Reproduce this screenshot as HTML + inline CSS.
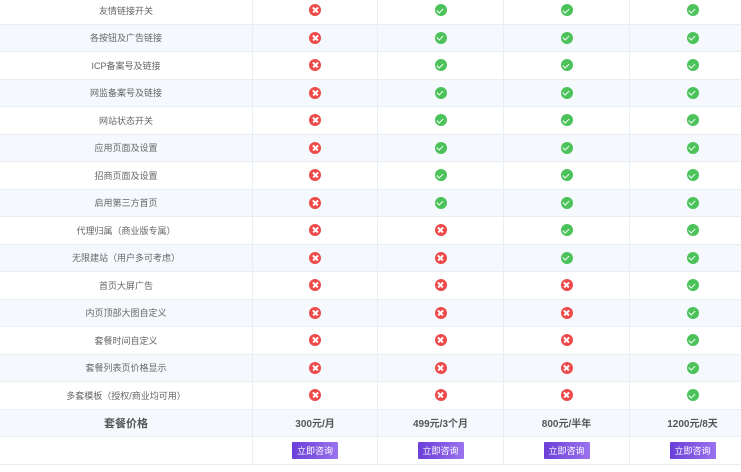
<!DOCTYPE html>
<html><head><meta charset="utf-8"><style>
body{margin:0;width:741px;height:472px;overflow:hidden;background:#fff;font-family:"Liberation Sans","Noto Sans CJK SC",sans-serif;position:relative}
.r{position:absolute;left:0;width:755px;height:27.5px;border-bottom:1px solid #e9eef2;box-sizing:border-box}
.r.b{background:#f5f9fd}
.c{position:absolute;top:0;height:100%;display:flex;align-items:center;justify-content:center;border-right:1px solid #e9eef2;box-sizing:border-box;font-size:9px;color:#666}
.c0{left:0;width:253px}.c1{left:253px;width:125px}.c2{left:378px;width:126px}.c3{left:504px;width:126px}.c4{left:630px;width:125px;border-right:none}
.x,.v{width:12px;height:12px;border-radius:50%;position:relative}
.x{background:#ee4a4a}.v{background:#4cc25b}
.x:before,.x:after{content:"";position:absolute;left:2.5px;top:5.2px;width:7px;height:1.6px;background:#fff;transform:rotate(45deg)}
.x:after{transform:rotate(-45deg)}
.v:before{content:"";position:absolute;left:3.3px;top:2.3px;width:2.6px;height:5px;border:solid #fff;border-width:0 1.6px 1.6px 0;transform:rotate(45deg)}
.p{font-weight:bold;color:#555;font-size:10px}
.btn{width:46px;height:17px;background:linear-gradient(90deg,#6a3fd8,#9b72ee);color:#fff;font-size:9px;display:flex;align-items:center;justify-content:center;border-radius:1px}
</style></head><body>
<div id="t"></div>
<script>
var names=["友情链接开关","各按钮及广告链接","ICP备案号及链接","网监备案号及链接","网站状态开关","应用页面及设置","招商页面及设置","启用第三方首页","代理归属（商业版专属）","无限建站（用户多可考虑）","首页大屏广告","内页顶部大图自定义","套餐时间自定义","套餐列表页价格显示","多套模板（授权/商业均可用）"];
var h="";
for(var i=0;i<15;i++){var n=i<8?1:(i<10?2:3);
h+='<div class="r'+(i%2?' b':'')+'" style="top:'+(-3+i*27.5)+'px"><div class="c c0">'+names[i]+'</div>';
for(var j=1;j<=4;j++)h+='<div class="c c'+j+'"><div class="'+(j<=n?'x':'v')+'"></div></div>';
h+='</div>';}
var pr=["300元/月","499元/3个月","800元/半年","1200元/8天"];
h+='<div class="r b" style="top:409.5px"><div class="c c0" style="font-size:11px;font-weight:bold;color:#555">套餐价格</div>';
for(var j=1;j<=4;j++)h+='<div class="c c'+j+' p">'+pr[j-1]+'</div>';
h+='</div><div class="r" style="top:437px"><div class="c c0"></div>';
for(var j=1;j<=4;j++)h+='<div class="c c'+j+'"><div class="btn">立即咨询</div></div>';
h+='</div>';
document.getElementById("t").innerHTML=h;
</script>
</body></html>
